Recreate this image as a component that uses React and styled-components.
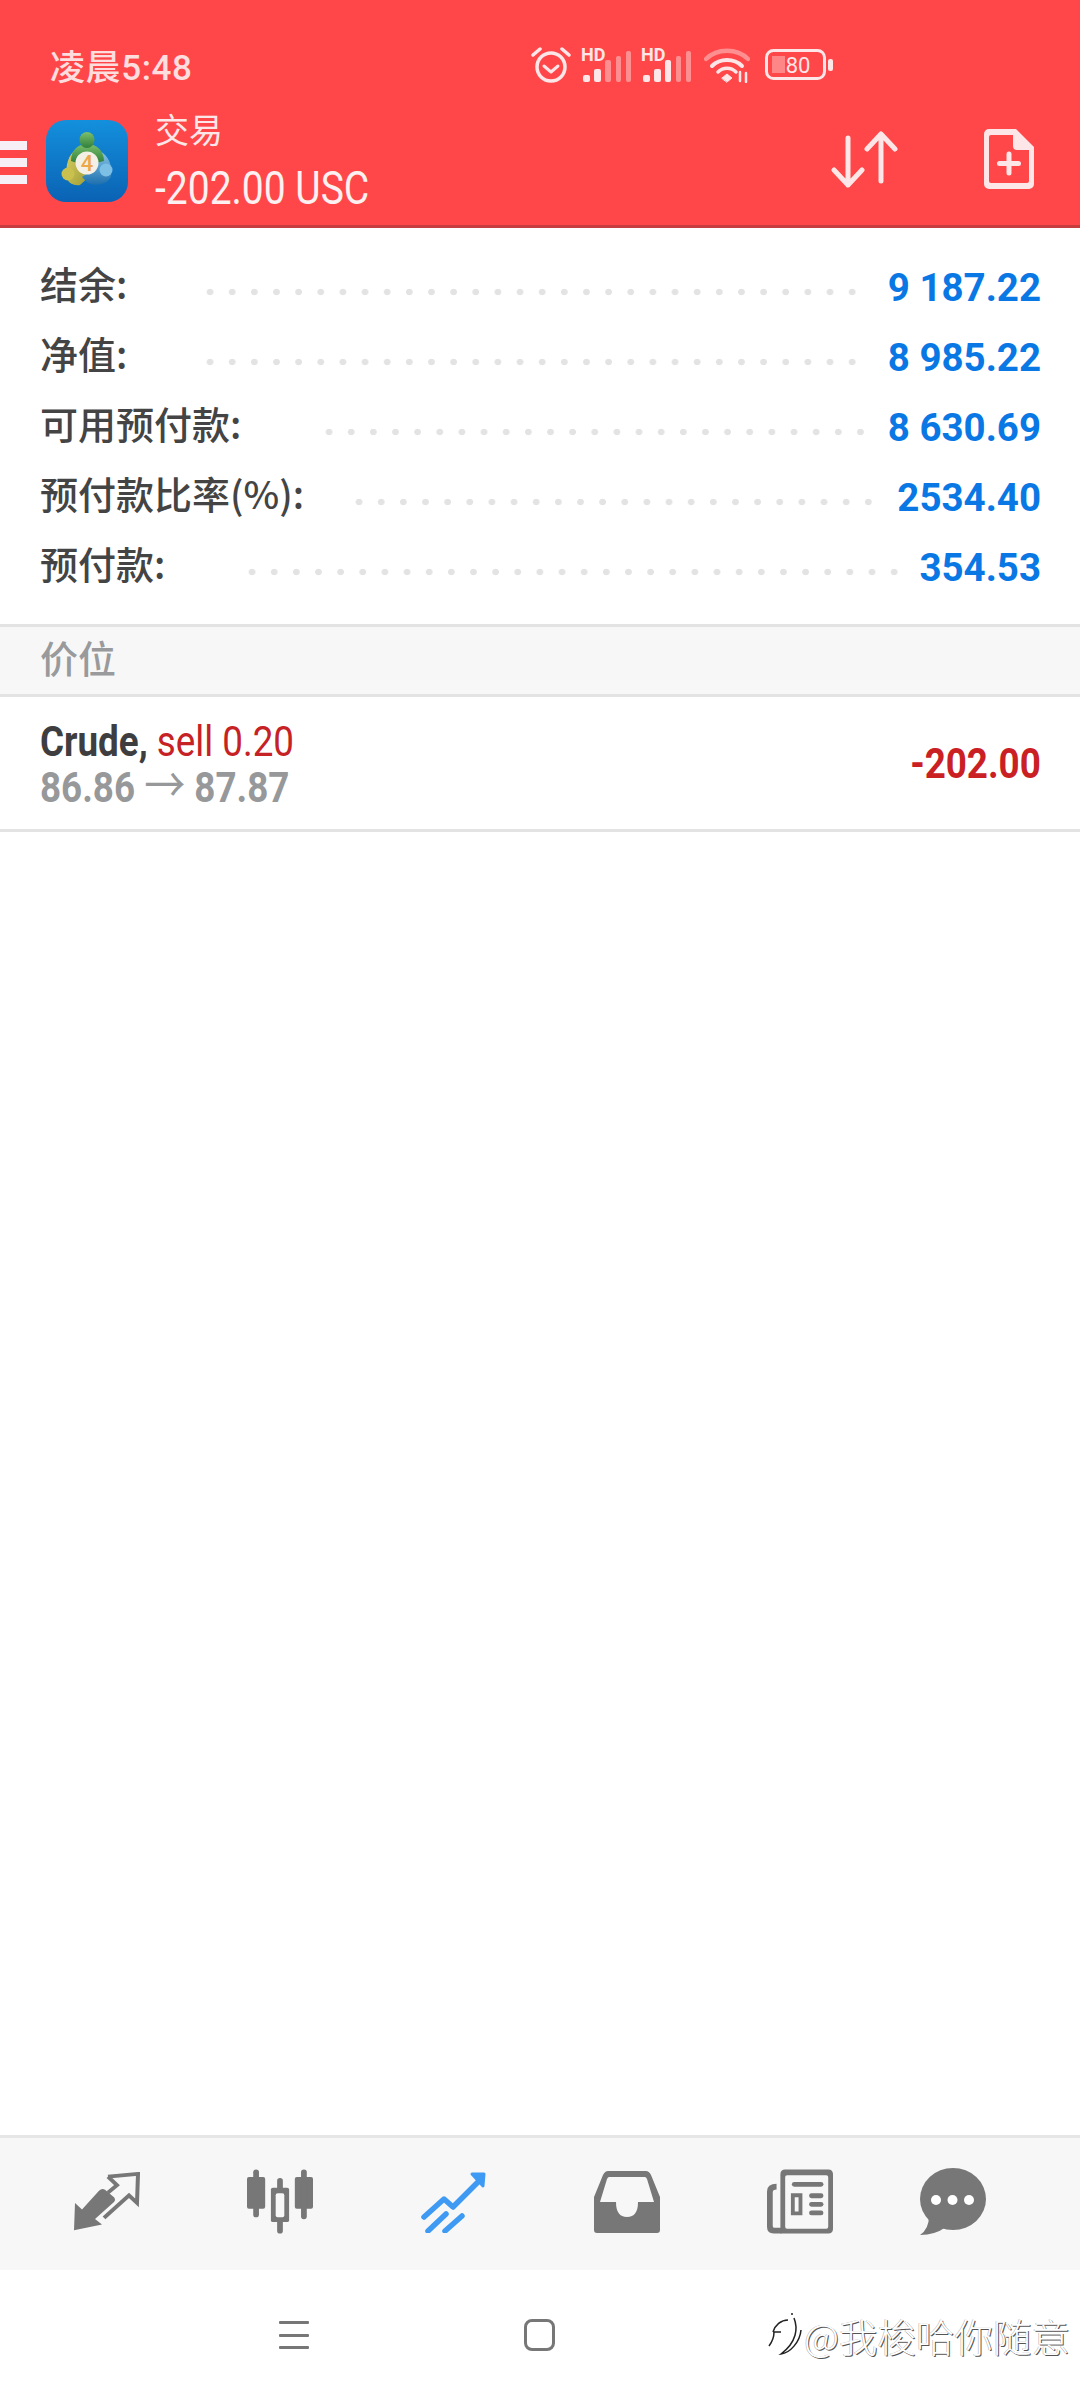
import styled, { createGlobalStyle } from 'styled-components';

const CJK = '"Noto Sans CJK SC"';
const DOT_STEP = 22.15;

const GlobalStyle = createGlobalStyle`
  html, body {
    margin: 0;
    padding: 0;
    background: #fff;
    font-family: Roboto, ${CJK}, sans-serif;
  }
  * { box-sizing: border-box; }
`;

const Page = styled.div`
  width: 1080px;
  height: 2400px;
  display: flex;
  flex-direction: column;
  background: #fff;
  overflow: hidden;
`;

const Header = styled.header`
  height: 228px;
  background: #ff4749;
  border-bottom: 3px solid #c63d40;
  color: #fde6e7;
`;

const StatusBar = styled.div`
  height: 96px;
  display: flex;
  align-items: center;
  padding: 33px 0 0 50px;
`;

const Time = styled.span`
  font: 500 35px Roboto, ${CJK}, sans-serif;
  letter-spacing: 0.6px;
  opacity: 0.95;
`;

const StatusIcons = styled.div`
  margin-left: auto;
  margin-right: 247px;
  display: flex;
  align-items: center;
`;

const IconGap = styled.span`
  width: ${(p) => p.$w}px;
`;

const Toolbar = styled.div`
  height: 129px;
  display: flex;
  align-items: center;
`;

const Burger = styled.div`
  width: 27px;
  height: 43px;
  margin-right: 19px;
  margin-top: 4px;
  display: flex;
  flex-direction: column;
  justify-content: space-between;
  span {
    height: 9px;
    background: #f6f0f6;
  }
`;

const Title = styled.div`
  margin-left: 27px;
  margin-top: -1px;
  display: flex;
  flex-direction: column;
`;

const TitleTop = styled.span`
  font: 400 34px/44px ${CJK}, sans-serif;
`;

const Narrow = styled.span`
  display: inline-block;
  transform: scaleX(${(p) => p.$x || 0.84});
  transform-origin: ${(p) => p.$origin || 'left'} center;
  white-space: nowrap;
`;

const Balance = styled.span`
  font: 400 47px/52px Roboto, sans-serif;
  margin-top: 11px;
  color: #fdf0f0;
`;

const ToolActions = styled.div`
  margin-left: auto;
  margin-right: 46px;
  margin-top: -3px;
  display: flex;
  align-items: center;
  gap: 86px;
`;

const Summary = styled.section`
  padding: 25px 39px 23px 40px;
  height: 396px;
`;

const Row = styled.div`
  height: 70px;
  display: flex;
  align-items: center;
`;

const Label = styled.span`
  font: 500 38px/58px ${CJK}, sans-serif;
  color: #444;
  white-space: nowrap;
  margin-bottom: 10px;
`;

const Dots = styled.div`
  flex: none;
  width: ${(p) => p.$count * DOT_STEP}px;
  height: 8px;
  margin: 8px ${(p) => p.$right}px 0 auto;
  background: radial-gradient(circle, #e3e3e3 3px, transparent 3.6px) left center / ${DOT_STEP}px 8px repeat-x;
`;

const Value = styled.span`
  font: 700 38.5px Roboto, sans-serif;
  color: #0a78e4;
  white-space: nowrap;
  margin-bottom: 2px;
`;

const SectionTitle = styled.div`
  height: 73px;
  padding: 0 40px 8px;
  display: flex;
  align-items: center;
  background: #f7f7f7;
  border-top: 3px solid #e3e3e3;
  border-bottom: 3px solid #e3e3e3;
  font: 500 38px ${CJK}, sans-serif;
  color: #999a9c;
`;

const Position = styled.div`
  height: 135px;
  padding: 0 39px 0 40px;
  display: flex;
  align-items: center;
  justify-content: space-between;
  border-bottom: 3px solid #e3e3e3;
`;

const PositionInfo = styled.div`
  display: flex;
  flex-direction: column;
  padding-top: 2px;
  font: 400 43px/46px Roboto, sans-serif;
`;

const Symbol = styled.b`
  font-weight: 700;
  color: #3e3e40;
`;

const Sell = styled.span`
  color: #c62125;
`;

const Prices = styled.span`
  font-weight: 700;
  color: #97989a;
`;

const PriceArrow = styled.span`
  font: 400 48px/0 ${CJK}, sans-serif;
`;

const Profit = styled.span`
  font: 700 43px Roboto, sans-serif;
  color: #cb2023;
`;

const Spacer = styled.div`
  flex: 1;
`;

const TabBar = styled.nav`
  height: 135px;
  padding: 0 0 5px 74px;
  display: flex;
  align-items: center;
  background: #f7f7f7;
  border-top: 3px solid #e6e6e6;
`;

const Tab = styled.div`
  flex: none;
  width: 66px;
  height: 66px;
  margin-right: ${(p) => p.$gap}px;
  color: ${(p) => p.$color || '#777'};
  display: flex;
  align-items: center;
  justify-content: center;
`;

const SystemNav = styled.div`
  height: 130px;
  padding-left: 279px;
  display: flex;
  align-items: center;
  position: relative;
`;

const NavMenu = styled.div`
  width: 30px;
  height: 28px;
  margin-right: 215px;
  display: flex;
  flex-direction: column;
  justify-content: space-between;
  span {
    height: 3px;
    border-radius: 1px;
    background: #777;
  }
`;

const NavHome = styled.div`
  width: 31px;
  height: 32px;
  border: 3px solid #777;
  border-radius: 8px;
`;

const Watermark = styled.div`
  position: absolute;
  left: 768px;
  top: 37px;
  display: flex;
  align-items: center;
  gap: 2px;
`;

const WatermarkText = styled.span`
  font: 300 38.5px ${CJK}, sans-serif;
  color: #fff;
  white-space: nowrap;
  text-shadow: 1px 1px 0 #555, -0.5px -0.5px 0 #aaa;
`;

const SUMMARY = [
  { label: '结余:', value: '9 187.22', count: 30, right: 24 },
  { label: '净值:', value: '8 985.22', count: 30, right: 24 },
  { label: '可用预付款:', value: '8 630.69', count: 25, right: 16 },
  { label: '预付款比率(%):', value: '2534.40', count: 24, right: 18 },
  { label: '预付款:', value: '354.53', count: 30, right: 14 },
];

const AlarmIcon = () => (
  <svg width="40" height="38" viewBox="0 0 40 38" fill="none" stroke="currentColor">
    <circle cx="20" cy="21" r="14" strokeWidth="3.5" />
    <path d="M13 20l7 6 7-6" strokeWidth="3" strokeLinecap="round" strokeLinejoin="round" />
    <path d="M2 9l7-6M38 9l-7-6" strokeWidth="3.5" strokeLinecap="round" />
  </svg>
);

const BARS = [
  { x: 2, w: 7, y: 27 },
  { x: 13, w: 7, y: 21 },
  { x: 24, w: 6, y: 12 },
  { x: 35, w: 5, y: 8 },
  { x: 45, w: 5, y: 3 },
];

const SignalIcon = ({ gap, bright }) => (
  <svg width="50" height="40" viewBox="0 -6 50 40" style={{ marginRight: gap, marginTop: -6 }}>
    <text x="0" y="13" fontFamily="Roboto" fontWeight="700" fontSize="18" fill="currentColor">HD</text>
    {BARS.map((bar, i) => (
      <rect
        key={bar.x}
        x={bar.x}
        y={bar.y}
        width={bar.w}
        height={34 - bar.y}
        rx="2"
        fill="currentColor"
        opacity={i < bright ? 1 : 0.45}
      />
    ))}
  </svg>
);

const WifiIcon = () => (
  <svg width="46" height="36" viewBox="0 0 46 36" fill="none" stroke="currentColor" strokeLinecap="round">
    <path d="M2 12C13 1 33 1 44 12" strokeWidth="4.5" opacity="0.45" />
    <path d="M8 19c8-8 22-8 30 0" strokeWidth="4" />
    <path d="M14 25c5-5 13-5 18 0" strokeWidth="3.5" />
    <path d="M18 31l5-4 5 4-5 4z" fill="currentColor" strokeWidth="1" />
    <path d="M36 25v9M42 26v9" strokeWidth="2.5" />
  </svg>
);

const BatteryIcon = () => (
  <svg width="68" height="31" viewBox="0 0 68 31">
    <rect x="1.5" y="1.5" width="58" height="28" rx="7" fill="none" stroke="currentColor" strokeWidth="3" />
    <path d="M7 7h13v17H7z" fill="currentColor" opacity="0.4" />
    <text x="33" y="24" textAnchor="middle" fontFamily="Roboto" fontSize="22" fill="currentColor">80</text>
    <rect x="63" y="10" width="5" height="12" rx="2" fill="currentColor" />
  </svg>
);

const MtLogo = () => (
  <svg width="82" height="82" viewBox="0 0 82 82">
    <defs>
      <linearGradient id="mtBg" x1="0" y1="0" x2="0" y2="1">
        <stop offset="0" stopColor="#1390dc" />
        <stop offset="1" stopColor="#0b62b4" />
      </linearGradient>
      <linearGradient id="mtGreen" x1="0" y1="0" x2="0" y2="1">
        <stop offset="0" stopColor="#7cc06a" />
        <stop offset="1" stopColor="#2f7f3c" />
      </linearGradient>
      <linearGradient id="mtYellow" x1="0" y1="0" x2="1" y2="1">
        <stop offset="0" stopColor="#d8cf63" />
        <stop offset="1" stopColor="#9c9a34" />
      </linearGradient>
      <linearGradient id="mtBlue" x1="0" y1="0" x2="0" y2="1">
        <stop offset="0" stopColor="#8cc8e8" />
        <stop offset="1" stopColor="#1d6fae" />
      </linearGradient>
    </defs>
    <rect width="82" height="82" rx="20" fill="url(#mtBg)" />
    <path d="M21 58C19 46 22 34 31 29l14 26-11 10c-6 1-12-2-13-7z" fill="url(#mtYellow)" />
    <path d="M54 31c9 5 13 16 11 25-3 8-14 11-23 7l-6-6 12-8z" fill="url(#mtBlue)" />
    <path d="M25 41c0-10 6-17 16-17s17 7 17 17l-8 2-9-3-10 3z" fill="url(#mtGreen)" />
    <ellipse cx="41" cy="20" rx="7.5" ry="8" fill="url(#mtGreen)" />
    <circle cx="22" cy="54" r="6.5" fill="#c9c04e" />
    <circle cx="60" cy="50" r="6.5" fill="#7cc0e6" />
    <circle cx="41" cy="43" r="11.5" fill="#f4f0e6" />
    <text x="41" y="51" textAnchor="middle" fontFamily="Roboto" fontWeight="500" fontSize="22" fill="#eda84a">4</text>
  </svg>
);

const SwapIcon = () => (
  <svg width="67" height="57" viewBox="0 0 67 57" fill="none" stroke="currentColor" strokeWidth="5" strokeLinecap="round" strokeLinejoin="round">
    <path d="M17 7v47M3 39l14 15 14-15" />
    <path d="M50 50V3M36 18L50 3l14 15" />
  </svg>
);

const NewFileIcon = () => (
  <svg width="50" height="60" viewBox="0 0 50 60">
    <path fillRule="evenodd" fill="currentColor" d="M5 0h27l18 18v37a5 5 0 0 1-5 5H5a5 5 0 0 1-5-5V5a5 5 0 0 1 5-5zM7 6a2 2 0 0 0-2 2v44a2 2 0 0 0 2 2h36a2 2 0 0 0 2-2V21H33a4 4 0 0 1-4-4V6z" />
    <path d="M25 25v19M15.500 34.500h19" stroke="currentColor" strokeWidth="5" fill="none" strokeLinecap="round" />
  </svg>
);

const TradeIcon = () => (
  <svg width="66" height="60" viewBox="0 0 66 64" preserveAspectRatio="none">
    <path fill="currentColor" d="M1 33l7 7 17-20q3-3 6-1l9 8q2 3 0 5L21 50l7 6-28 6z" />
    <path fill="none" stroke="currentColor" strokeWidth="4" d="M34 5l30-3-1 31-8-8-25 24M34 5l9 9-9 8" />
  </svg>
);

const ChartIcon = () => (
  <svg width="69" height="67" viewBox="0 0 69 67" fill="currentColor">
    <rect x="0" y="8" width="19" height="33" rx="2" />
    <rect x="6.500" y="0" width="6" height="50" rx="3" />
    <rect x="50" y="8" width="19" height="33" rx="2" />
    <rect x="56.500" y="0" width="6" height="52" rx="3" />
    <rect x="31.500" y="9" width="6" height="58" rx="3" />
    <rect x="25" y="19" width="19" height="36" rx="2" />
    <rect x="30" y="25" width="9" height="25" rx="2" fill="#f7f7f7" />
  </svg>
);

const TrendIcon = () => (
  <svg width="65" height="62" viewBox="0 0 65 62" fill="none" stroke="currentColor" strokeWidth="5.500" strokeLinecap="round" strokeLinejoin="round">
    <path d="M3 46l20-18 9 8 26-26" />
    <path d="M51 3l12 0-1 12z" fill="currentColor" strokeWidth="3" />
    <path d="M7 60l18-17M24 60l17-15" />
  </svg>
);

const InboxIcon = () => (
  <svg width="66" height="62" viewBox="0 0 66 62">
    <path fill="currentColor" fillRule="evenodd" d="M14 0h38q3 0 5 4l9 22v33q0 3-3 3H3q-3 0-3-3V26L9 4q2-4 5-4zM15 6q-1 0-2 2L6 31h16q0 15 11 15t11-15h16L53 8q-1-2-2-2z" />
  </svg>
);

const NewsIcon = () => (
  <svg width="69" height="67" viewBox="0 0 69 67" fill="currentColor">
    <path fillRule="evenodd" d="M19 0h45q5 0 5 5v57q0 5-5 5H14V5q0-5 5-5zM21 6q-2 0-2 2v52q0 2 2 2h41q2 0 2-2V8q0-2-2-2z" />
    <path d="M10 15q-10 0-10 8v37q0 7 7 7h8v-6H8q-2 0-2-2V24q0-3 4-3z" />
    <rect x="26" y="13" width="33" height="5" rx="2.500" />
    <path fillRule="evenodd" d="M25 25h12v23H25zM29 29v15h4V29z" />
    <rect x="44" y="25" width="15" height="5" rx="2.500" />
    <rect x="44" y="34" width="15" height="5" rx="2.500" />
    <rect x="44" y="43" width="15" height="5" rx="2.500" />
  </svg>
);

const ChatIcon = () => (
  <svg width="66" height="67" viewBox="0 0 66 67">
    <ellipse cx="33" cy="31" rx="33" ry="31" fill="currentColor" />
    <path d="M9 48q0 13-9 19 15 0 26-8z" fill="currentColor" />
    <circle cx="16" cy="32" r="5" fill="#fff" />
    <circle cx="32.500" cy="32" r="5" fill="#fff" />
    <circle cx="49" cy="32" r="5" fill="#fff" />
  </svg>
);

const NoteLogo = () => (
  <svg width="34" height="46" viewBox="0 0 34 46" fill="none" stroke="#222" strokeWidth="1.500">
    <path d="M20 8c-7 0-13 5-15 12M5 20h8M6 20c0 6-2 10-5 14" />
    <path d="M24 1v2M26 6c4 10 3 24-13 36 9-1 19-12 20-24" />
  </svg>
);

export default function App() {
  return (
    <Page>
      <GlobalStyle />
      <Header>
        <StatusBar>
          <Time>凌晨5:48</Time>
          <StatusIcons>
            <AlarmIcon />
            <IconGap $w={10} />
            <SignalIcon gap={10} bright={2} />
            <SignalIcon gap={13} bright={3} />
            <WifiIcon />
            <IconGap $w={15} />
            <BatteryIcon />
          </StatusIcons>
        </StatusBar>
        <Toolbar>
          <Burger><span /><span /><span /></Burger>
          <MtLogo />
          <Title>
            <TitleTop>交易</TitleTop>
            <Balance><Narrow $x={0.83}>-202.00 USC</Narrow></Balance>
          </Title>
          <ToolActions>
            <SwapIcon />
            <NewFileIcon />
          </ToolActions>
        </Toolbar>
      </Header>

      <Summary>
        {SUMMARY.map((row) => (
          <Row key={row.label}>
            <Label>{row.label}</Label>
            <Dots $count={row.count} $right={row.right} />
            <Value>{row.value}</Value>
          </Row>
        ))}
      </Summary>

      <SectionTitle>价位</SectionTitle>
      <Position>
        <PositionInfo>
          <span>
            <Narrow $x={0.855}>
              <Symbol>Crude,</Symbol> <Sell>sell 0.20</Sell>
            </Narrow>
          </span>
          <Prices><Narrow $x={0.855}>86.86 <PriceArrow>→</PriceArrow> 87.87</Narrow></Prices>
        </PositionInfo>
        <Profit><Narrow $x={0.855} $origin="right">-202.00</Narrow></Profit>
      </Position>

      <Spacer />

      <TabBar>
        <Tab $gap={107}><TradeIcon /></Tab>
        <Tab $gap={107}><ChartIcon /></Tab>
        <Tab $gap={108} $color="#3e9af3"><TrendIcon /></Tab>
        <Tab $gap={107}><InboxIcon /></Tab>
        <Tab $gap={87}><NewsIcon /></Tab>
        <Tab $gap={0}><ChatIcon /></Tab>
      </TabBar>
      <SystemNav>
        <NavMenu><span /><span /><span /></NavMenu>
        <NavHome />
        <Watermark>
          <NoteLogo />
          <WatermarkText>@我梭哈你随意</WatermarkText>
        </Watermark>
      </SystemNav>
    </Page>
  );
}
